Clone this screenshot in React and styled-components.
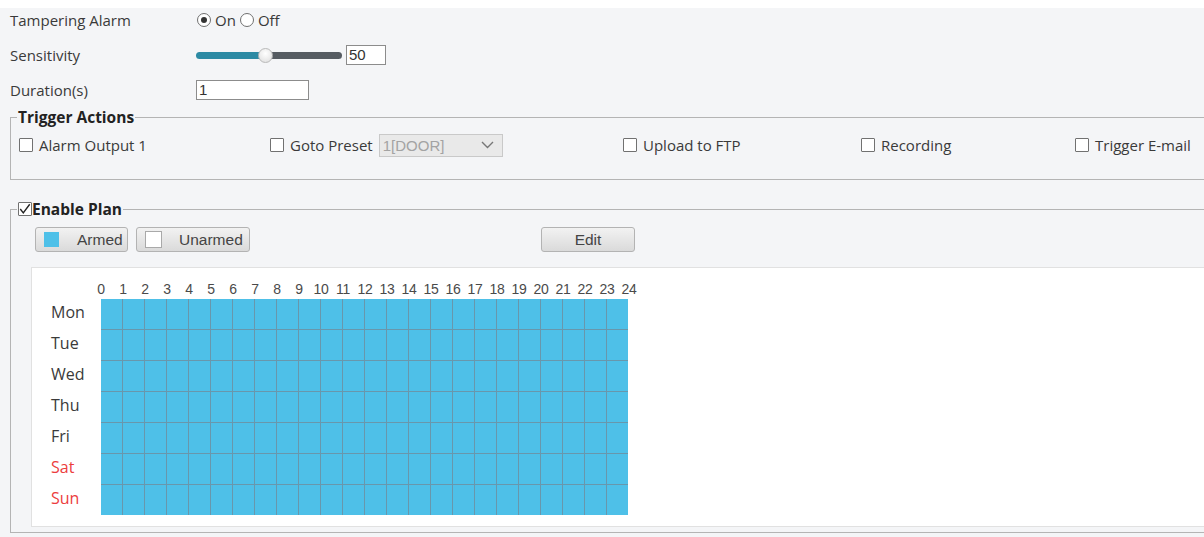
import React from 'react';
import styled, { createGlobalStyle } from 'styled-components';

const GlobalStyle = createGlobalStyle`
  body {
    margin: 0;
    background: #ffffff;
    font-family: "Open Sans", "Noto Sans", sans-serif;
    color: #3a3a3a;
  }
`;

const Page = styled.div`
  padding-top: 8px;
  width: 1204px;
  height: 537px;
  box-sizing: border-box;
  overflow: hidden;
`;

const Panel = styled.div`
  background: #f4f5f7;
  height: 529px;
  padding-left: 10px;
  box-sizing: border-box;
`;

const FormGrid = styled.div`
  display: grid;
  grid-template-columns: 186px 1fr;
  grid-auto-rows: 24px;
  row-gap: 11px;
  align-items: center;
  font-size: 15px;
`;

const Label = styled.span`
  white-space: nowrap;
`;

const Control = styled.div`
  display: flex;
  align-items: center;
  gap: ${(p) => p.$gap || 0}px;
`;

const Radio = styled.span`
  width: 14px;
  height: 14px;
  border: 1px solid #707070;
  border-radius: 50%;
  background: #fff;
  box-sizing: border-box;
  display: inline-flex;
  align-items: center;
  justify-content: center;
  margin: 0 4px 0 1px;
  &::after {
    content: '';
    width: 6px;
    height: 6px;
    border-radius: 50%;
    background: ${(p) => (p.$checked ? '#333' : 'transparent')};
  }
`;

const RadioText = styled.span`
  margin-right: 3px;
`;

const Slider = styled.div`
  position: relative;
  width: 146px;
  height: 16px;
  display: flex;
  align-items: center;
`;

const Track = styled.div`
  width: 100%;
  height: 7px;
  border-radius: 4px;
  background: linear-gradient(
    to right,
    #2c8aa4 0,
    #2c8aa4 ${(p) => p.$fill}px,
    #565c62 ${(p) => p.$fill}px
  );
`;

const Thumb = styled.span`
  position: absolute;
  top: 1px;
  width: 15px;
  height: 15px;
  border-radius: 50%;
  background: radial-gradient(circle at 50% 35%, #ffffff, #dcdcdc);
  border: 1px solid #b9b9b9;
  box-sizing: border-box;
`;

const TextInput = styled.div`
  width: ${(p) => p.$width}px;
  height: 20px;
  border: 1px solid #8c8c8c;
  background: #fff;
  box-sizing: border-box;
  font-family: "Liberation Sans", Arial, sans-serif;
  font-size: 15px;
  line-height: 18px;
  padding-left: 2px;
  color: #333;
`;

const Group = styled.fieldset`
  margin: ${(p) => p.$top}px 0 0 0;
  width: 1210px;
  box-sizing: border-box;
  border: 1px solid #b4b4b4;
  border-right: none;
  padding: ${(p) => p.$pad};
  min-width: 0;
`;

const Legend = styled.legend`
  margin-left: 6px;
  padding: 0 1px;
  font-weight: 700;
  font-size: 15.5px;
  line-height: 18px;
  color: #222;
  display: flex;
  align-items: center;
`;

const ActionRow = styled.div`
  display: grid;
  grid-template-columns: 251px 353px 238px 214px 1fr;
  align-items: center;
  height: 24px;
  padding-left: 8px;
  font-size: 15px;
`;

const Check = styled.label`
  display: flex;
  align-items: center;
  gap: 6px;
  white-space: nowrap;
`;

const Box = styled.span`
  width: 14px;
  height: 14px;
  border: 1px solid #717171;
  border-radius: 1px;
  background: #fff;
  box-sizing: border-box;
  flex: none;
  display: inline-flex;
  align-items: center;
  justify-content: center;
`;

const Select = styled.div`
  width: 124px;
  height: 23px;
  background: #e9e9e9;
  border: 1px solid #c9c9c9;
  box-sizing: border-box;
  display: flex;
  align-items: center;
  justify-content: space-between;
  padding: 0 8px 0 3px;
  font-family: "Liberation Sans", Arial, sans-serif;
  font-size: 15px;
  color: #a3a3a3;
`;

const Toolbar = styled.div`
  display: flex;
  align-items: center;
  gap: 8px;
  padding-left: 24px;
  height: 25px;
`;

const ToolButton = styled.div`
  width: ${(p) => p.$width}px;
  height: 25px;
  margin-left: ${(p) => p.$offset || 0}px;
  box-sizing: border-box;
  border: 1px solid #b3b3b3;
  border-radius: 3px;
  background: linear-gradient(#f2f2f2, #dadada);
  display: flex;
  align-items: center;
  justify-content: ${(p) => (p.$swatch ? 'flex-start' : 'center')};
  padding-left: ${(p) => (p.$swatch ? 8 : 0)}px;
  font-family: "Liberation Sans", Arial, sans-serif;
  font-size: 15.5px;
  color: #444;
`;

const Swatch = styled.span`
  width: ${(p) => p.$size}px;
  height: ${(p) => p.$size}px;
  background: ${(p) => p.$color};
  border: ${(p) => (p.$outlined ? '1px solid #a9a9a9' : 'none')};
  box-sizing: border-box;
  margin-right: ${(p) => p.$gap}px;
`;

const Schedule = styled.div`
  margin: 15px 0 0 20px;
  height: 260px;
  background: #ffffff;
  border: 1px solid #e1e1e1;
  border-right: none;
  box-sizing: border-box;
  padding: 12px 0 0 19px;
`;

const HourRow = styled.div`
  display: grid;
  grid-template-columns: repeat(25, 22px);
  margin-left: 39px;
  height: 18px;
  margin-bottom: 1px;
  font-family: "Liberation Sans", Arial, sans-serif;
  font-size: 14px;
  line-height: 18px;
  color: #4a4a4a;
  text-align: center;
  letter-spacing: -0.3px;
`;

const Body = styled.div`
  display: flex;
`;

const DayColumn = styled.div`
  width: 50px;
  display: grid;
  grid-template-rows: repeat(7, 30px);
  row-gap: 1px;
`;

const Day = styled.span`
  font-size: 16px;
  line-height: 26px;
  color: ${(p) => (p.$weekend ? '#ec3d3d' : '#3a3a3a')};
`;

const Grid = styled.div`
  display: grid;
  grid-template-columns: repeat(24, 21px);
  grid-template-rows: repeat(7, 30px);
  gap: 1px;
  background: #6897ac;
`;

const Cell = styled.span`
  background: ${(p) => (p.$armed ? '#4ec0e8' : '#ffffff')};
`;

const days = ['Mon', 'Tue', 'Wed', 'Thu', 'Fri', 'Sat', 'Sun'];
const hours = Array.from({ length: 25 }, (_, i) => i);

const Tick = () => (
  <svg width="14" height="14" viewBox="0 0 14 14">
    <path d="M1.5 7 L5 11.5 L12.5 1.5" fill="none" stroke="#222" strokeWidth="1.6" />
  </svg>
);

const Chevron = () => (
  <svg width="13" height="8" viewBox="0 0 13 8">
    <path d="M1 1 L6.5 6.5 L12 1" fill="none" stroke="#777" strokeWidth="1.4" />
  </svg>
);

export default function App() {
  const sensitivity = 50;
  return (
    <>
      <GlobalStyle />
      <Page>
        <Panel>
          <FormGrid>
            <Label>Tampering Alarm</Label>
            <Control>
              <Radio $checked />
              <RadioText>On</RadioText>
              <Radio />
              <RadioText>Off</RadioText>
            </Control>
            <Label>Sensitivity</Label>
            <Control $gap={4}>
              <Slider>
                <Track $fill={(sensitivity / 100) * 146 - 4} />
                <Thumb style={{ left: `${(sensitivity / 100) * 146 - 11}px` }} />
              </Slider>
              <TextInput $width={40}>{sensitivity}</TextInput>
            </Control>
            <Label>Duration(s)</Label>
            <Control>
              <TextInput $width={113}>1</TextInput>
            </Control>
          </FormGrid>

          <Group $top={6} $pad="7px 0 22px 0">
            <Legend>Trigger Actions</Legend>
            <ActionRow>
              <Check><Box />Alarm Output 1</Check>
              <Check>
                <Box />Goto Preset
                <Select>1[DOOR]<Chevron /></Select>
              </Check>
              <Check><Box />Upload to FTP</Check>
              <Check><Box />Recording</Check>
              <Check><Box />Trigger E-mail</Check>
            </ActionRow>
          </Group>

          <Group $top={20} $pad="9px 0 5px 0">
            <Legend>
              <Box><Tick /></Box>
              Enable Plan
            </Legend>
            <Toolbar>
              <ToolButton $width={93} $swatch>
                <Swatch $size={15} $color="#4ec0e8" $gap={18} />
                Armed
              </ToolButton>
              <ToolButton $width={114} $swatch>
                <Swatch $size={17} $color="#ffffff" $outlined $gap={17} />
                Unarmed
              </ToolButton>
              <ToolButton $width={94} $offset={283}>Edit</ToolButton>
            </Toolbar>
            <Schedule>
              <HourRow>
                {hours.map((h) => (
                  <span key={h}>{h}</span>
                ))}
              </HourRow>
              <Body>
                <DayColumn>
                  {days.map((d) => (
                    <Day key={d} $weekend={d === 'Sat' || d === 'Sun'}>{d}</Day>
                  ))}
                </DayColumn>
                <Grid>
                  {days.map((d) =>
                    Array.from({ length: 24 }, (_, h) => <Cell key={d + h} $armed />)
                  )}
                </Grid>
              </Body>
            </Schedule>
          </Group>
        </Panel>
      </Page>
    </>
  );
}
